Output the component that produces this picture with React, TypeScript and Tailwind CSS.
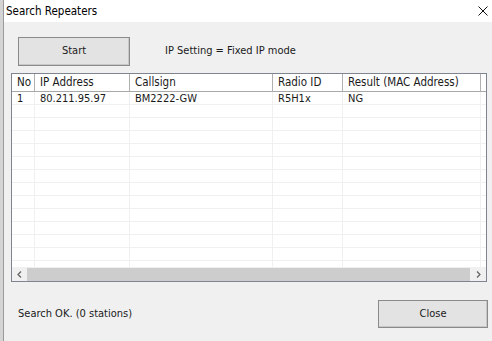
const font = { fontFamily: '"DejaVu Sans Condensed", "DejaVu Sans", sans-serif' };

const columns = [
  { title: "No", width: "w-[23px]" },
  { title: "IP Address", width: "w-[95px]" },
  { title: "Callsign", width: "w-[143px]" },
  { title: "Radio ID", width: "w-[70px]" },
  { title: "Result (MAC Address)", width: "w-[138px]" },
];

const rows = [["1", "80.211.95.97", "BM2222-GW", "R5H1x", "NG"]];

const Row = ({ cells }: { cells: string[] }) => {
  return (
    <div className="flex h-[13px] shrink-0 border-b border-[#f0f0f0]">
      {columns.map((c, i) => (
        <div
          key={i}
          className={`${c.width} shrink-0 border-r border-[#f0f0f0] pl-[5px] leading-[13px] text-[11px] text-[#1a1a1a] whitespace-nowrap`}
        >
          {cells[i]}
        </div>
      ))}
      <div className="flex-1" />
    </div>
  );
};

const App = () => {
  const empty = Array.from({ length: 13 }, () => ["", "", "", "", ""]);
  return (
    <div className="flex w-[492px] h-[341px] overflow-hidden bg-[#dcdcdc]" style={font}>
      <div className="w-[3px] shrink-0 bg-[#d4d4d4]" />
      <div className="flex flex-col w-[489px] shrink-0 border-l border-[#9a9a9a]">
        {/* title bar */}
        <div className="flex items-center justify-between h-[22px] bg-white">
          <span className="pl-[2px] pt-[2px] text-[11.5px] text-black">Search Repeaters</span>
          <svg width="10" height="10" viewBox="0 0 10 10" className="mr-[4px] -mt-[1px]">
            <path d="M0.5 0.5 L9.5 9.5 M9.5 0.5 L0.5 9.5" stroke="#111" strokeWidth="1" />
          </svg>
        </div>

        {/* body */}
        <div className="flex flex-col flex-1 bg-[#f0f0f0]">
          <div className="flex items-center pl-[14px] pt-[15px]">
            <button className="w-[112px] h-[29px] border border-[#8a8a8a] bg-[#e3e3e3] text-[11px] text-[#1a1a1a] shadow-[inset_-1px_-1px_0_#c8c8c8]">
              Start
            </button>
            <span className="ml-[35px] text-[11px] text-[#1a1a1a]">IP Setting = Fixed IP mode</span>
          </div>

          {/* list view */}
          <div className="flex flex-col ml-[7px] mt-[7px] w-[476px] h-[209px] border border-[#7f8590] bg-white">
            <div className="flex h-[18px] shrink-0 border-b border-[#a8a8a8]">
              {columns.map((c, i) => (
                <div
                  key={i}
                  className={`${c.width} shrink-0 border-r border-[#b0b0b0] pl-[5px] leading-[17px] text-[11.5px] text-[#1a1a1a] whitespace-nowrap`}
                >
                  {c.title}
                </div>
              ))}
              <div className="flex-1" />
            </div>
            <div className="flex flex-col flex-1 overflow-hidden">
              {rows.map((r, i) => (
                <Row key={i} cells={r} />
              ))}
              {empty.map((r, i) => (
                <Row key={"e" + i} cells={r} />
              ))}
            </div>
            {/* horizontal scrollbar */}
            <div className="flex items-center h-[14px] shrink-0 bg-[#f0f0f0]">
              <div className="flex items-center justify-center w-[15px] h-full">
                <svg width="5" height="7" viewBox="0 0 5 7">
                  <path d="M4 0.5 L1 3.5 L4 6.5" fill="none" stroke="#606060" strokeWidth="1.2" />
                </svg>
              </div>
              <div className="flex-1 h-[13px] bg-[#cdcdcd]" />
              <div className="flex items-center justify-center w-[16px] h-full">
                <svg width="5" height="7" viewBox="0 0 5 7">
                  <path d="M1 0.5 L4 3.5 L1 6.5" fill="none" stroke="#606060" strokeWidth="1.2" />
                </svg>
              </div>
            </div>
          </div>

          {/* bottom row */}
          <div className="flex items-center justify-between mt-[18px] pl-[14px] w-[484px]">
            <span className="text-[11px] text-[#1a1a1a]">Search OK. (0 stations)</span>
            <button className="w-[110px] h-[28px] border border-[#8a8a8a] bg-[#e3e3e3] text-[11px] text-[#1a1a1a] shadow-[inset_-1px_-1px_0_#c8c8c8]">
              Close
            </button>
          </div>
        </div>
      </div>
    </div>
  );
};

export default App;
